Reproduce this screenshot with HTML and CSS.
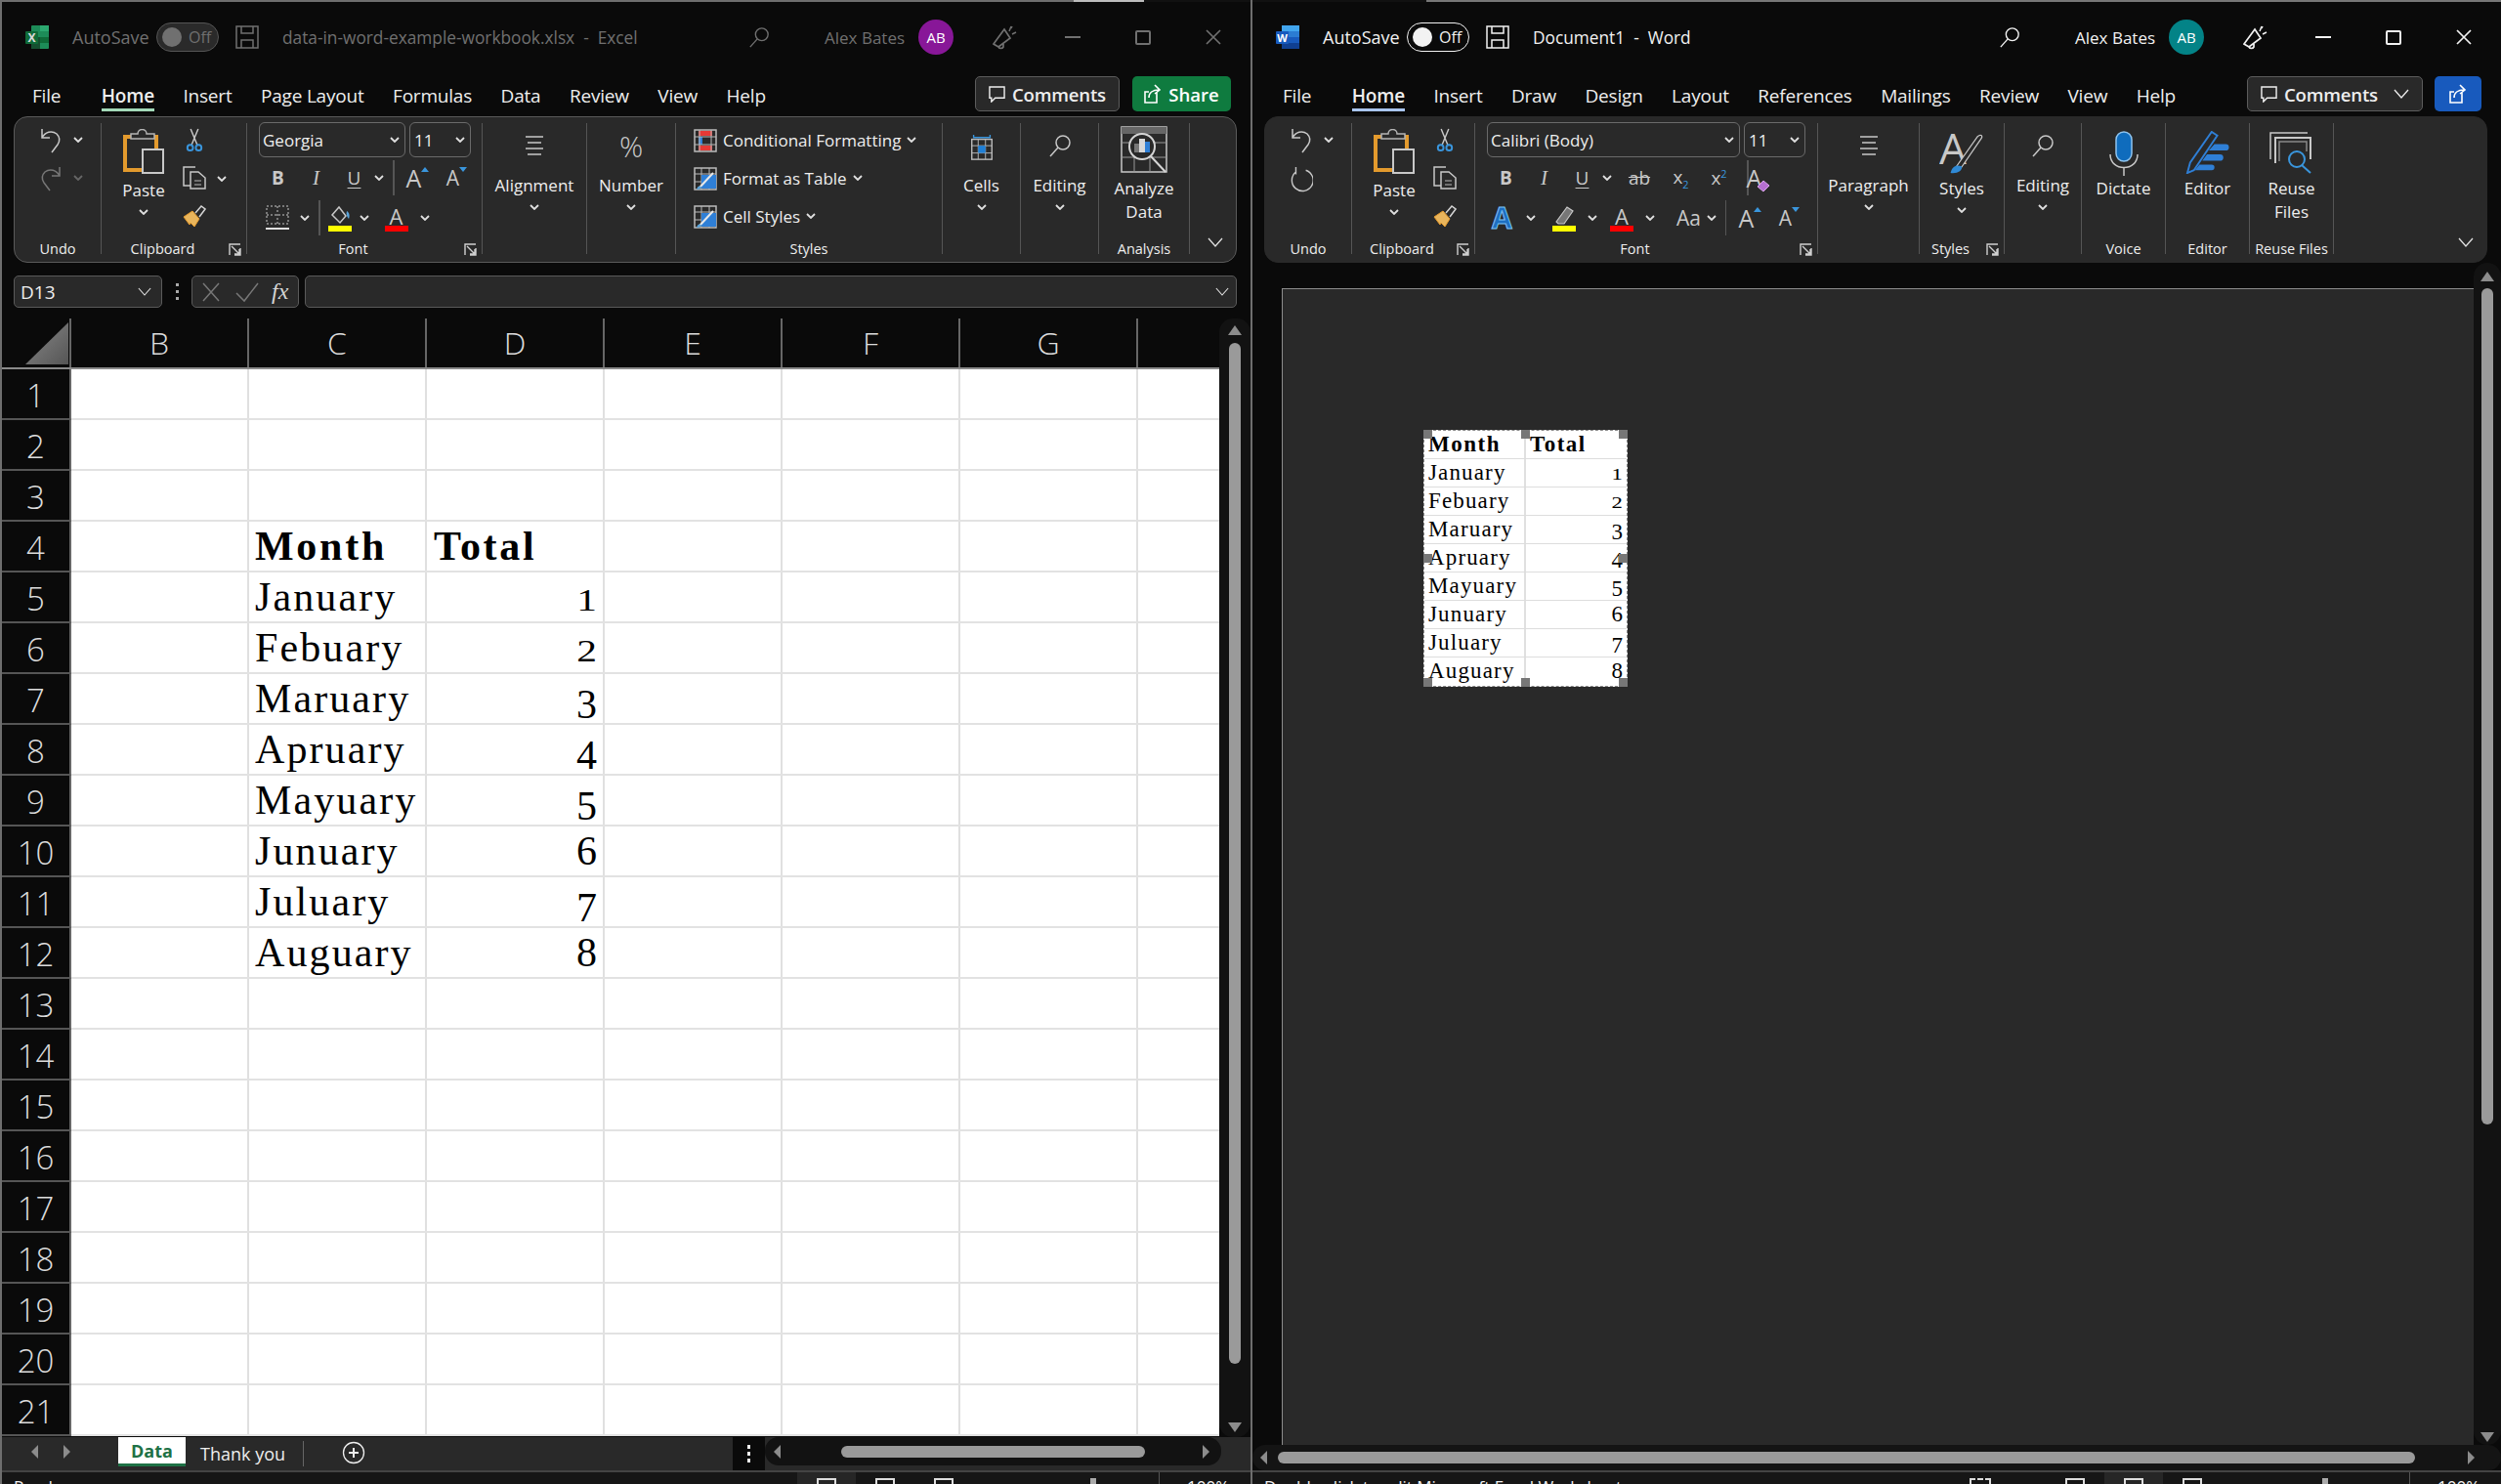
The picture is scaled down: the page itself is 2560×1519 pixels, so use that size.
FILE: index.html
```html
<!DOCTYPE html>
<html lang="en">
<head>
    <meta charset="UTF-8">
    <title>Excel and Word side by side</title>
    <link rel="stylesheet" href="styles.css">
</head>
<body>
<svg class="defs" width="0" height="0">
    <symbol id="save" viewBox="0 0 24 24"><path d="M1 1h22v22H1zM6 1v7h12V1M6 23v-8h12v8" fill="none" stroke="currentColor" stroke-width="1.5"/></symbol>
    <symbol id="search" viewBox="0 0 24 24"><circle cx="15" cy="9" r="7" fill="none" stroke="currentColor" stroke-width="1.5"/><path d="M10 14L2 23" stroke="currentColor" stroke-width="1.5"/></symbol>
    <symbol id="feedback" viewBox="0 0 25 26"><path d="M1 20L12 5l6 9-12 9zM6 23c1 2 4 2 5 0v-3" fill="none" stroke="currentColor" stroke-width="1.7"/><path d="M17 7l2-5M20 10l4-2M19 4l1-2" stroke="currentColor" stroke-width="1.5"/></symbol>
    <symbol id="chev" viewBox="0 0 10 6"><path d="M1 1l4 4 4-4" fill="none" stroke="currentColor" stroke-width="1.8"/></symbol>
    <symbol id="chev-thin" viewBox="0 0 16 10"><path d="M1 1l7 8 7-8" fill="none" stroke="currentColor" stroke-width="1.3"/></symbol>
    <symbol id="bubble" viewBox="0 0 18 18"><path d="M1 1h16v12H7l-4 4v-4H1z" fill="none" stroke="currentColor" stroke-width="1.5"/></symbol>
    <symbol id="share" viewBox="0 0 18 20"><path d="M13 9v10H1V8h4M5 14c0-5 4-8 10-8M11 1l5 5-5 4" fill="none" stroke="currentColor" stroke-width="1.6"/></symbol>
    <symbol id="undo" viewBox="0 0 24 26"><path d="M3 1v9h8M3 10C6 4 13 2 18 6c4 4 3 8 1 11l-6 8" fill="none" stroke="currentColor" stroke-width="1.5"/></symbol>
    <symbol id="redo" viewBox="0 0 24 26"><path d="M21 1v9h-8M21 10C18 4 11 2 6 6c-4 4-3 8-1 11l6 8" fill="none" stroke="currentColor" stroke-width="1.5"/></symbol>
    <symbol id="repeat" viewBox="0 0 26 28"><path d="M7 1v8M18 4.5a11.8 11.8 0 1 1-11 2" fill="none" stroke="currentColor" stroke-width="1.5"/></symbol>
    <symbol id="paste" viewBox="0 0 42 46"><path d="M9 8H2v34h18M30 8h4v12" fill="none" stroke="#e39a2d" stroke-width="4"/><path d="M8 10V5h7a4 4 0 0 1 9 0h8v5z" fill="#292929" stroke="#b5b5b5" stroke-width="1.5"/><rect x="20" y="21" width="21" height="24" fill="#292929" stroke="#c8c8c8" stroke-width="2"/></symbol>
    <symbol id="cut" viewBox="0 0 18 26"><path d="M5 1l7 17M13 1L6 18" stroke="#c8c8c8" stroke-width="1.5"/><circle cx="4.5" cy="21" r="3" fill="none" stroke="#3a96dd" stroke-width="2"/><circle cx="13.5" cy="21" r="3" fill="none" stroke="#3a96dd" stroke-width="2"/></symbol>
    <symbol id="copy" viewBox="0 0 24 24"><path d="M13 1H1v19h7" fill="none" stroke="#c8c8c8" stroke-width="1.5"/><path d="M8 6h8l7 6v11H8z" fill="#292929" stroke="#c8c8c8" stroke-width="1.5"/><path d="M12 15h7M12 19h7" stroke="#888" stroke-width="1.5"/></symbol>
    <symbol id="brush" viewBox="0 0 24 24"><path d="M1 13l9-6 7 8-5 8-4-4-1 2z" fill="#e9b55c" stroke="#e39a2d"/><path d="M13 9l6-7 4 3-6 8" fill="#292929" stroke="#d5d5d5" stroke-width="1.5"/></symbol>
    <symbol id="launcher" viewBox="0 0 13 13"><path d="M1 12V1h11M12 5v7H6M3 3l8 8M11 6v5H6" fill="none" stroke="#d0d0d0" stroke-width="1.4"/></symbol>
    <symbol id="align" viewBox="0 0 24 24"><path d="M3 3h18M5 9h14M3 15h18M5 21h14" stroke="currentColor" stroke-width="1.5"/></symbol>
    <symbol id="borders" viewBox="0 0 24 26"><path d="M1 1h22v18H1zM12 1v18M1 10h22" fill="none" stroke="#c8c8c8" stroke-dasharray="2 2"/><path d="M0 24h24" stroke="#e0e0e0" stroke-width="2"/></symbol>
    <symbol id="fill" viewBox="0 0 24 28"><path d="M4 11l7-8 7 9-6 7z" fill="none" stroke="#c8c8c8" stroke-width="1.5"/><path d="M19 7c3 2 3 5 2 8-2-2-3-5-2-8z" fill="#5aa5dc"/><rect y="22" width="24" height="6" fill="#ff0"/></symbol>
    <symbol id="marker" viewBox="0 0 24 28"><path d="M4 18L15 3l6 4-9 13H6z" fill="#777" stroke="#c8c8c8" stroke-width="1.2"/><rect y="22" width="24" height="6" fill="#ff0"/></symbol>
    <symbol id="cf" viewBox="0 0 24 24"><rect x="1" y="1" width="22" height="22" fill="none" stroke="#bbb" stroke-width="1.5"/><rect x="5" y="2" width="14" height="5" fill="#e53935"/><rect x="5" y="17" width="14" height="5" fill="#e53935"/><rect x="5" y="8" width="4" height="8" fill="#2f7fd6"/><path d="M1 8h22M1 16h22M6 1v22M18 1v22" stroke="#bbb"/></symbol>
    <symbol id="fat" viewBox="0 0 24 24"><rect x="1" y="1" width="22" height="22" fill="none" stroke="#bbb" stroke-width="1.5"/><path d="M1 7h22M1 15h22M8 1v22M16 1v22" stroke="#bbb"/><rect x="8" y="8" width="15" height="14" fill="#2f7fd6"/><path d="M6 21L20 6" stroke="#e8e8e8" stroke-width="2"/><path d="M3 23c1-4 3-4 5-3 0 2-2 3-5 3z" fill="#5aa5dc"/></symbol>
    <symbol id="cells" viewBox="0 0 24 30"><path d="M3 1v3h18V1" fill="none" stroke="#3a96dd" stroke-width="1.5"/><rect x="1" y="6" width="22" height="22" fill="none" stroke="#bbb" stroke-width="1.5"/><path d="M1 13h22M1 21h22M8 6v22M16 6v22" stroke="#bbb"/><rect x="8" y="13" width="8" height="8" fill="#1f7fd6"/></symbol>
    <symbol id="analyze" viewBox="0 0 48 48"><rect x="1" y="1" width="46" height="46" fill="none" stroke="#c8c8c8" stroke-width="1.5"/><rect x="1" y="1" width="46" height="7" fill="#666"/><path d="M1 32h46M1 17h46M14 32v16M30 32v16" stroke="#999"/><circle cx="22" cy="21" r="13" fill="#292929" stroke="#d5d5d5" stroke-width="2"/><rect x="14" y="18" width="5" height="9" fill="#777"/><rect x="19" y="13" width="6" height="14" fill="#d8d8d8"/><rect x="25" y="16" width="5" height="11" fill="#2f7fd6"/><path d="M31 31l15 16" stroke="#d5d5d5" stroke-width="2"/></symbol>
    <symbol id="mic" viewBox="0 0 30 46"><rect x="7" y="1" width="16" height="30" rx="8" fill="#0f6cbd" stroke="#8fc4ef" stroke-width="1.5"/><path d="M1 24c0 18 28 18 28 0M15 37v9" fill="none" stroke="#c8c8c8" stroke-width="1.5"/></symbol>
    <symbol id="editor" viewBox="0 0 46 46"><path d="M1 45l3-11L27 1l6 4L8 42z" fill="#292929" stroke="#2f7fd6" stroke-width="2"/><path d="M30 14h12a3 3 0 0 1 0 7H24zM22 25h14a3 3 0 0 1 0 7H17zM14 36h13a3 3 0 0 1 0 6H9z" fill="#2f7fd6"/></symbol>
    <symbol id="reuse" viewBox="0 0 46 42"><path d="M1 28V1h38" fill="none" stroke="#c8c8c8" stroke-width="1.5"/><path d="M6 32V6h36v22" fill="none" stroke="#c8c8c8" stroke-width="2"/><path d="M10 30V10h28v10" fill="none" stroke="#888" stroke-width="1.5"/><circle cx="28" cy="28" r="8" fill="#292929" stroke="#3a96dd" stroke-width="2"/><path d="M33 34l9 8" stroke="#3a96dd" stroke-width="2"/></symbol>
    <symbol id="eraser" viewBox="0 0 14 14"><path d="M1 8l6-6 6 5-6 6z" fill="#b56fd0" stroke="#d9a5ea"/></symbol>
    <symbol id="x-mark" viewBox="0 0 18 22"><path d="M1 2l16 18M17 2L1 20" stroke="currentColor" stroke-width="1.5"/></symbol>
    <symbol id="close" viewBox="0 0 16 16"><path d="M1 1l14 14M15 1L1 15" stroke="currentColor" stroke-width="1.7"/></symbol>
    <symbol id="check" viewBox="0 0 24 22"><path d="M1 12l8 8L23 2" fill="none" stroke="currentColor" stroke-width="1.5"/></symbol>
    <symbol id="plus-c" viewBox="0 0 24 24"><circle cx="12" cy="12" r="10.5" fill="none" stroke="currentColor" stroke-width="1.3"/><path d="M12 7v10M7 12h10" stroke="currentColor" stroke-width="2"/></symbol>
</svg>

<div class="desktop">
    <!-- Excel, inactive window -->
    <section class="window excel">
        <div class="edge"><span class="edge-a"></span><span class="edge-b"></span></div>
        <header class="titlebar">
            <svg class="logo" viewBox="0 0 24 24"><rect x="6" y="0" width="18" height="24" rx="1" fill="#21a366"/><rect x="15" y="0" width="9" height="6" fill="#33c481"/><rect x="6" y="12" width="9" height="12" fill="#185c37"/><rect x="15" y="12" width="9" height="6" fill="#107c41"/><rect x="0" y="6" width="13" height="13" rx="1" fill="#107c41"/><text x="6.5" y="16.5" font-size="12" font-weight="700" text-anchor="middle" fill="#fff" font-family="Open Sans">X</text></svg>
            <span class="autosave">AutoSave</span>
            <span class="toggle"><i></i>Off</span>
            <svg class="save"><use href="#save"/></svg>
            <span class="doc-title">data-in-word-example-workbook.xlsx &nbsp;-&nbsp; Excel</span>
            <svg class="tsearch"><use href="#search"/></svg>
            <span class="user">Alex Bates</span>
            <span class="avatar">AB</span>
            <svg class="feedback"><use href="#feedback"/></svg>
            <span class="win-min"></span>
            <span class="win-max"></span>
            <svg class="win-close"><use href="#close"/></svg>
        </header>
        <nav class="tabs">
            <span class="tab tab-file">File</span>
            <span class="tab tab-active">Home</span>
            <span class="tab">Insert</span>
            <span class="tab">Page Layout</span>
            <span class="tab">Formulas</span>
            <span class="tab">Data</span>
            <span class="tab">Review</span>
            <span class="tab">View</span>
            <span class="tab">Help</span>
            <span class="btn-comments"><svg class="ic-bubble"><use href="#bubble"/></svg>Comments</span>
            <span class="btn-share"><svg class="ic-share"><use href="#share"/></svg>Share</span>
        </nav>
        <div class="ribbon">
            <div class="group g-undo">
                <div class="group-body">
                    <div class="undo-row"><svg class="ic-undo"><use href="#undo"/></svg><svg class="chev"><use href="#chev"/></svg></div>
                    <div class="undo-row dim"><svg class="ic-undo"><use href="#redo"/></svg><svg class="chev"><use href="#chev"/></svg></div>
                </div>
                <div class="group-label">Undo</div>
            </div>
            <div class="group g-clip">
                <div class="group-body clip-body">
                    <div class="paste">
                        <svg class="ic-paste"><use href="#paste"/></svg>
                        <span class="big-text">Paste</span>
                        <svg class="chev big-chev"><use href="#chev"/></svg>
                    </div>
                    <div class="clip-tools">
                        <div class="clip-row"><svg class="ic-cut"><use href="#cut"/></svg></div>
                        <div class="clip-row"><svg class="ic-24"><use href="#copy"/></svg><svg class="chev clip-chev"><use href="#chev"/></svg></div>
                        <div class="clip-row"><svg class="ic-24"><use href="#brush"/></svg></div>
                    </div>
                </div>
                <div class="group-label with-launcher"><span>Clipboard</span><svg class="launcher"><use href="#launcher"/></svg></div>
            </div>
            <div class="group g-font">
                <div class="group-body">
                    <div class="combos">
                        <div class="combo combo-name">Georgia<svg class="chev"><use href="#chev"/></svg></div>
                        <div class="combo combo-size">11<svg class="chev"><use href="#chev"/></svg></div>
                    </div>
                    <div class="font-row">
                        <span class="fb fb-b">B</span><span class="fb fb-i">I</span><span class="fb fb-u">U</span><svg class="chev fb-chev"><use href="#chev"/></svg>
                        <span class="vsep"></span>
                        <span class="grow">A<i class="caret up"></i></span><span class="grow grow-sm">A<i class="caret down"></i></span>
                    </div>
                    <div class="font-row row-low">
                        <svg class="ic-24 ic-borders"><use href="#borders"/></svg><svg class="chev fb-chev"><use href="#chev"/></svg>
                        <span class="vsep"></span>
                        <svg class="ic-24 ic-fill"><use href="#fill"/></svg><svg class="chev fb-chev"><use href="#chev"/></svg>
                        <span class="color-a">A</span><svg class="chev fb-chev"><use href="#chev"/></svg>
                    </div>
                </div>
                <div class="group-label with-launcher"><span>Font</span><svg class="launcher"><use href="#launcher"/></svg></div>
            </div>
            <div class="group g-align">
                <div class="group-body big">
                    <div class="big-icon"><svg class="ic-24"><use href="#align"/></svg></div>
                    <span class="big-text">Alignment</span>
                    <svg class="chev big-chev"><use href="#chev"/></svg>
                </div>
            </div>
            <div class="group g-number">
                <div class="group-body big">
                    <div class="big-icon icon-pct">%</div>
                    <span class="big-text">Number</span>
                    <svg class="chev big-chev"><use href="#chev"/></svg>
                </div>
            </div>
            <div class="group g-styles">
                <div class="group-body style-list">
                    <div class="style-row"><svg class="ic-24"><use href="#cf"/></svg>Conditional Formatting<svg class="chev"><use href="#chev"/></svg></div>
                    <div class="style-row"><svg class="ic-24"><use href="#fat"/></svg>Format as Table<svg class="chev"><use href="#chev"/></svg></div>
                    <div class="style-row"><svg class="ic-24"><use href="#fat"/></svg>Cell Styles<svg class="chev"><use href="#chev"/></svg></div>
                </div>
                <div class="group-label">Styles</div>
            </div>
            <div class="group g-cells">
                <div class="group-body big">
                    <div class="big-icon"><svg class="ic-cells"><use href="#cells"/></svg></div>
                    <span class="big-text">Cells</span>
                    <svg class="chev big-chev"><use href="#chev"/></svg>
                </div>
            </div>
            <div class="group g-editing">
                <div class="group-body big">
                    <div class="big-icon"><svg class="ic-24"><use href="#search"/></svg></div>
                    <span class="big-text">Editing</span>
                    <svg class="chev big-chev"><use href="#chev"/></svg>
                </div>
            </div>
            <div class="group g-analysis">
                <div class="group-body big">
                    <div class="big-icon icon-tall"><svg class="ic-analyze"><use href="#analyze"/></svg></div>
                    <span class="big-text two-line">Analyze<br>Data</span>
                </div>
                <div class="group-label">Analysis</div>
            </div>
            <svg class="collapse"><use href="#chev-thin"/></svg>
        </div>

        <div class="formula-bar">
            <div class="name-box">D13<svg class="chev"><use href="#chev-thin"/></svg></div>
            <div class="fdots"><i></i><i></i><i></i></div>
            <div class="fx-box"><svg class="ic-x"><use href="#x-mark"/></svg><svg class="ic-check"><use href="#check"/></svg><span class="fx">fx</span></div>
            <div class="formula"><svg class="chev"><use href="#chev-thin"/></svg></div>
        </div>

        <div class="sheet-wrap">
            <div class="sheet">
                <div class="colhead">
                    <div class="corner"><i></i></div>
                    <div class="col">B</div><div class="col">C</div><div class="col">D</div><div class="col">E</div><div class="col">F</div><div class="col">G</div>
                </div>
                <div class="row"><div class="rh">1</div><div class="cells"></div></div>
                <div class="row"><div class="rh">2</div><div class="cells"></div></div>
                <div class="row"><div class="rh">3</div><div class="cells"></div></div>
                <div class="row"><div class="rh">4</div><div class="cells"><div class="cell-c serif strong">Month</div><div class="cell-d serif strong">Total</div></div></div>
                <div class="row"><div class="rh">5</div><div class="cells"><div class="cell-c serif">January</div><div class="cell-d serif num"><i class="d-x">1</i></div></div></div>
                <div class="row"><div class="rh">6</div><div class="cells"><div class="cell-c serif">Febuary</div><div class="cell-d serif num"><i class="d-x">2</i></div></div></div>
                <div class="row"><div class="rh">7</div><div class="cells"><div class="cell-c serif">Maruary</div><div class="cell-d serif num"><i class="d-low">3</i></div></div></div>
                <div class="row"><div class="rh">8</div><div class="cells"><div class="cell-c serif">Apruary</div><div class="cell-d serif num"><i class="d-low">4</i></div></div></div>
                <div class="row"><div class="rh">9</div><div class="cells"><div class="cell-c serif">Mayuary</div><div class="cell-d serif num"><i class="d-low">5</i></div></div></div>
                <div class="row"><div class="rh">10</div><div class="cells"><div class="cell-c serif">Junuary</div><div class="cell-d serif num"><i>6</i></div></div></div>
                <div class="row"><div class="rh">11</div><div class="cells"><div class="cell-c serif">Juluary</div><div class="cell-d serif num"><i class="d-low">7</i></div></div></div>
                <div class="row"><div class="rh">12</div><div class="cells"><div class="cell-c serif">Auguary</div><div class="cell-d serif num"><i>8</i></div></div></div>
                <div class="row"><div class="rh">13</div><div class="cells"></div></div>
                <div class="row"><div class="rh">14</div><div class="cells"></div></div>
                <div class="row"><div class="rh">15</div><div class="cells"></div></div>
                <div class="row"><div class="rh">16</div><div class="cells"></div></div>
                <div class="row"><div class="rh">17</div><div class="cells"></div></div>
                <div class="row"><div class="rh">18</div><div class="cells"></div></div>
                <div class="row"><div class="rh">19</div><div class="cells"></div></div>
                <div class="row"><div class="rh">20</div><div class="cells"></div></div>
                <div class="row"><div class="rh">21</div><div class="cells"></div></div>
            </div>
            <div class="vscroll vscroll-xl">
                <i class="tri tri-up"></i>
                <div class="vthumb"></div>
                <i class="tri tri-down"></i>
            </div>
        </div>

        <div class="tabbar">
            <div class="sheet-nav"><i class="tri tri-left"></i><i class="tri tri-right"></i></div>
            <span class="sheet-tab sheet-active">Data</span>
            <span class="sheet-tab">Thank you</span>
            <svg class="ic-plus"><use href="#plus-c"/></svg>
            <div class="tab-dots"><i></i><i></i><i></i></div>
            <div class="hscroll hscroll-xl">
                <i class="tri tri-left"></i>
                <div class="hthumb"></div>
                <i class="tri tri-right"></i>
            </div>
        </div>
        <footer class="status">
            <span class="status-text">Ready</span>
            <span class="view view-on"><b></b></span><span class="view"><b></b></span><span class="view"><b></b></span>
            <span class="zoom-tick"></span>
            <span class="zoom-pct">100%</span>
        </footer>
    </section>

    <!-- Word, active window -->
    <section class="window word">
        <div class="edge"><span class="edge-a"></span><span class="edge-b"></span></div>
        <header class="titlebar">
            <svg class="logo" viewBox="0 0 24 24"><rect x="6" y="0" width="18" height="24" rx="1" fill="#2b7cd3"/><rect x="6" y="0" width="18" height="6" fill="#41a5ee"/><rect x="6" y="12" width="18" height="6" fill="#185abd"/><rect x="6" y="18" width="18" height="6" fill="#103f91"/><rect x="0" y="6" width="13" height="13" rx="1" fill="#185abd"/><text x="6.5" y="16.5" font-size="11" font-weight="700" text-anchor="middle" fill="#fff" font-family="Open Sans">W</text></svg>
            <span class="autosave">AutoSave</span>
            <span class="toggle"><i></i>Off</span>
            <svg class="save"><use href="#save"/></svg>
            <span class="doc-title">Document1 &nbsp;-&nbsp; Word</span>
            <svg class="tsearch"><use href="#search"/></svg>
            <span class="user">Alex Bates</span>
            <span class="avatar">AB</span>
            <svg class="feedback"><use href="#feedback"/></svg>
            <span class="win-min"></span>
            <span class="win-max"></span>
            <svg class="win-close"><use href="#close"/></svg>
        </header>
        <nav class="tabs">
            <span class="tab tab-file">File</span>
            <span class="tab tab-active">Home</span>
            <span class="tab">Insert</span>
            <span class="tab">Draw</span>
            <span class="tab">Design</span>
            <span class="tab">Layout</span>
            <span class="tab">References</span>
            <span class="tab">Mailings</span>
            <span class="tab">Review</span>
            <span class="tab">View</span>
            <span class="tab">Help</span>
            <span class="btn-comments"><svg class="ic-bubble"><use href="#bubble"/></svg>Comments<svg class="comments-chev"><use href="#chev-thin"/></svg></span>
            <span class="btn-share"><svg class="ic-share"><use href="#share"/></svg></span>
        </nav>
        <div class="ribbon">
            <div class="group g-undo">
                <div class="group-body">
                    <div class="undo-row"><svg class="ic-undo"><use href="#undo"/></svg><svg class="chev"><use href="#chev"/></svg></div>
                    <div class="undo-row"><svg class="ic-undo"><use href="#repeat"/></svg></div>
                </div>
                <div class="group-label">Undo</div>
            </div>
            <div class="group g-clip">
                <div class="group-body clip-body">
                    <div class="paste">
                        <svg class="ic-paste"><use href="#paste"/></svg>
                        <span class="big-text">Paste</span>
                        <svg class="chev big-chev"><use href="#chev"/></svg>
                    </div>
                    <div class="clip-tools">
                        <div class="clip-row"><svg class="ic-cut"><use href="#cut"/></svg></div>
                        <div class="clip-row"><svg class="ic-24"><use href="#copy"/></svg></div>
                        <div class="clip-row"><svg class="ic-24"><use href="#brush"/></svg></div>
                    </div>
                </div>
                <div class="group-label with-launcher"><span>Clipboard</span><svg class="launcher"><use href="#launcher"/></svg></div>
            </div>
            <div class="group g-font">
                <div class="group-body">
                    <div class="combos">
                        <div class="combo combo-name">Calibri (Body)<svg class="chev"><use href="#chev"/></svg></div>
                        <div class="combo combo-size">11<svg class="chev"><use href="#chev"/></svg></div>
                    </div>
                    <div class="font-row">
                        <span class="fb fb-b">B</span><span class="fb fb-i">I</span><span class="fb fb-u">U</span><svg class="chev fb-chev"><use href="#chev"/></svg>
                        <span class="fb fb-strike">ab</span>
                        <span class="fb fb-script">x<sub>2</sub></span>
                        <span class="fb fb-script">x<sup>2</sup></span>
                        <span class="vsep"></span>
                        <span class="clear-fmt">A<svg class="ic-eraser"><use href="#eraser"/></svg></span>
                    </div>
                    <div class="font-row row-low">
                        <span class="text-fx">A</span><svg class="chev fb-chev"><use href="#chev"/></svg>
                        <svg class="ic-24 ic-fill"><use href="#marker"/></svg><svg class="chev fb-chev"><use href="#chev"/></svg>
                        <span class="color-a">A</span><svg class="chev fb-chev"><use href="#chev"/></svg>
                        <span class="case">Aa</span><svg class="chev fb-chev"><use href="#chev"/></svg>
                        <span class="vsep"></span>
                        <span class="grow">A<i class="caret up"></i></span><span class="grow grow-sm">A<i class="caret down"></i></span>
                    </div>
                </div>
                <div class="group-label with-launcher"><span>Font</span><svg class="launcher"><use href="#launcher"/></svg></div>
            </div>
            <div class="group g-para">
                <div class="group-body big">
                    <div class="big-icon"><svg class="ic-24"><use href="#align"/></svg></div>
                    <span class="big-text">Paragraph</span>
                    <svg class="chev big-chev"><use href="#chev"/></svg>
                </div>
            </div>
            <div class="group g-wstyles">
                <div class="group-body big">
                    <div class="big-icon icon-lg">
                        <svg class="ic-46" viewBox="0 0 46 46"><text x="-1" y="36" font-size="46" font-family="Open Sans" fill="#c8c8c8">A</text><path d="M16 40L40 6c3-3 6-1 4 2L22 40" fill="#292929" stroke="#c8c8c8" stroke-width="1.3"/><path d="M11 45c2-8 7-9 12-7 1 5-5 8-12 7z" fill="#2f8ad6"/></svg>
                    </div>
                    <span class="big-text">Styles</span>
                    <svg class="chev big-chev"><use href="#chev"/></svg>
                </div>
                <div class="group-label with-launcher"><span>Styles</span><svg class="launcher"><use href="#launcher"/></svg></div>
            </div>
            <div class="group g-wediting">
                <div class="group-body big">
                    <div class="big-icon"><svg class="ic-24"><use href="#search"/></svg></div>
                    <span class="big-text">Editing</span>
                    <svg class="chev big-chev"><use href="#chev"/></svg>
                </div>
            </div>
            <div class="group g-voice">
                <div class="group-body big">
                    <div class="big-icon icon-lg"><svg class="ic-mic"><use href="#mic"/></svg></div>
                    <span class="big-text">Dictate</span>
                </div>
                <div class="group-label">Voice</div>
            </div>
            <div class="group g-voice">
                <div class="group-body big">
                    <div class="big-icon icon-lg"><svg class="ic-46"><use href="#editor"/></svg></div>
                    <span class="big-text">Editor</span>
                </div>
                <div class="group-label">Editor</div>
            </div>
            <div class="group g-voice">
                <div class="group-body big">
                    <div class="big-icon icon-lg"><svg class="ic-46"><use href="#reuse"/></svg></div>
                    <span class="big-text two-line">Reuse<br>Files</span>
                </div>
                <div class="group-label">Reuse Files</div>
            </div>
            <svg class="collapse"><use href="#chev-thin"/></svg>
        </div>

        <div class="doc-area">
            <div class="page">
                <div class="embed">
                    <div class="embed-row"><div class="ecol serif strong">Month</div><div class="ecol serif strong">Total</div></div>
                    <div class="embed-row"><div class="ecol serif">January</div><div class="ecol serif num"><i class="d-x">1</i></div></div>
                    <div class="embed-row"><div class="ecol serif">Febuary</div><div class="ecol serif num"><i class="d-x">2</i></div></div>
                    <div class="embed-row"><div class="ecol serif">Maruary</div><div class="ecol serif num"><i class="d-low">3</i></div></div>
                    <div class="embed-row"><div class="ecol serif">Apruary</div><div class="ecol serif num"><i class="d-low">4</i></div></div>
                    <div class="embed-row"><div class="ecol serif">Mayuary</div><div class="ecol serif num"><i class="d-low">5</i></div></div>
                    <div class="embed-row"><div class="ecol serif">Junuary</div><div class="ecol serif num"><i>6</i></div></div>
                    <div class="embed-row"><div class="ecol serif">Juluary</div><div class="ecol serif num"><i class="d-low">7</i></div></div>
                    <div class="embed-row"><div class="ecol serif">Auguary</div><div class="ecol serif num"><i>8</i></div></div>
                    <!-- resize handles sit over the table -->
                    <i class="handle h-tl"></i><i class="handle h-tc"></i><i class="handle h-tr"></i>
                    <i class="handle h-ml"></i><i class="handle h-mr"></i>
                    <i class="handle h-bl"></i><i class="handle h-bc"></i><i class="handle h-br"></i>
                </div>
            </div>
            <div class="vscroll vscroll-wd">
                <i class="tri tri-up"></i>
                <div class="vthumb"></div>
                <i class="tri tri-down"></i>
            </div>
        </div>
        <div class="hscroll hscroll-wd">
            <i class="tri tri-left"></i>
            <div class="hthumb"></div>
            <i class="tri tri-right"></i>
        </div>
        <footer class="status">
            <span class="status-text">Double-click to edit Microsoft Excel Worksheet</span>
            <span class="focus-ic"></span>
            <span class="view"><b></b></span><span class="view view-on"><b></b></span><span class="view"><b></b></span>
            <span class="zoom-tick"></span>
            <span class="zoom-pct">100%</span>
        </footer>
    </section>
</div>
</body>
</html>
```

FILE: styles.css
```css
* {
    box-sizing: border-box;
}
body {
    margin: 0;
    background-color: #0a0a0a;
    font-family: "Open Sans", "Noto Sans", sans-serif;
    color: #eee;
    overflow: hidden;
}
i {
    font-style: normal;
}
svg {
    display: block;
    flex: none;
}
.defs {
    position: absolute;
}
.desktop {
    display: flex;
    width: 2560px;
    height: 1519px;
    overflow: hidden;
}

/* windows */
.window {
    width: 1280px;
    height: 1519px;
    display: flex;
    flex-direction: column;
    border-left: 2px solid #6e6e6e;
    background-color: #0a0a0a;
    overflow: hidden;
}
.excel {
    --title: #707070;
    --accent: #a3d9b8;
}
.word {
    --title: #f2f2f2;
    --accent: #a9c5ee;
}
.edge {
    height: 2px;
    flex: none;
    display: flex;
    background-color: #6e6e6e;
}
.excel .edge-a {
    width: 1097px;
}
.excel .edge-b {
    width: 72px;
    background-color: #bdbdbd;
}
.excel .edge {
    background: linear-gradient(90deg, #6e6e6e 0 1169px, #111 1169px);
}
.word .edge-a {
    width: 178px;
    background-color: #111;
}
.word .edge {
    background-color: #777;
}

/* title bar */
.titlebar {
    height: 76px;
    flex: none;
    display: flex;
    align-items: center;
    padding: 0 30px 4px 24px;
    color: var(--title);
    font-size: 18px;
}
.logo {
    width: 24px;
    height: 24px;
}
.excel .logo {
    opacity: .85;
}
.autosave {
    width: 76px;
    margin-left: 24px;
    white-space: nowrap;
}
.toggle {
    width: 64px;
    height: 30px;
    margin-left: 10px;
    border: 1.5px solid var(--title);
    border-radius: 15px;
    display: flex;
    align-items: center;
    padding-left: 5px;
    gap: 7px;
    font-size: 16px;
}
.excel .toggle {
    border-color: #555;
    background-color: #2a2a2a;
}
.toggle i {
    width: 20px;
    height: 20px;
    border-radius: 50%;
    background-color: var(--title);
}
.save {
    width: 24px;
    height: 24px;
    margin-left: 17px;
}
.doc-title {
    margin-left: 24px;
    font-size: 17.3px;
    white-space: nowrap;
}
.tsearch {
    width: 22px;
    height: 22px;
    margin-left: auto;
}
.user {
    width: 79px;
    margin-left: 56px;
    font-size: 17px;
    white-space: nowrap;
    text-align: right;
}
.avatar {
    width: 36px;
    height: 36px;
    margin-left: 17px;
    border-radius: 50%;
    text-align: center;
    line-height: 36px;
    font-size: 15px;
    color: #fff;
}
.excel .avatar {
    background-color: #881798;
}
.word .avatar {
    background-color: #038387;
}
.feedback {
    width: 25px;
    height: 26px;
    margin-left: 40px;
}
.win-min {
    width: 16px;
    height: 2px;
    margin-left: 49px;
    background-color: var(--title);
}
.win-max {
    width: 16px;
    height: 15px;
    margin-left: 56px;
    border: 2px solid var(--title);
    border-radius: 2px;
}
.win-close {
    width: 16px;
    height: 16px;
    margin-left: 56px;
}

/* tab row */
.tabs {
    height: 41px;
    flex: none;
    display: flex;
    padding: 0 20px 0 31px;
    gap: 29.5px;
    font-size: 19px;
}
.tab {
    height: 36px;
    line-height: 40px;
    white-space: nowrap;
    letter-spacing: -.2px;
}
.tab-file {
    margin-right: 12px;
}
.tab-active {
    font-weight: 600;
    border-bottom: 3px solid var(--accent);
}
.btn-comments {
    height: 36px;
    margin-left: auto;
    display: flex;
    align-items: center;
    gap: 7px;
    padding: 0 13px;
    border: 1px solid #5c5c5c;
    border-radius: 5px;
    background-color: #292929;
    font-size: 18.6px;
    font-weight: 600;
    letter-spacing: -.2px;
}
.excel .btn-comments {
    width: 148px;
}
.word .btn-comments {
    width: 180px;
}
.ic-bubble {
    width: 17px;
    height: 17px;
}
.comments-chev {
    width: 16px;
    height: 10px;
    margin-left: 9px;
}
.btn-share {
    height: 36px;
    display: flex;
    align-items: center;
    justify-content: center;
    gap: 7px;
    border-radius: 5px;
    color: #fff;
    font-size: 18.6px;
    font-weight: 600;
}
.excel .btn-share {
    width: 101px;
    margin-left: -16.5px;
    background-color: #0f7b3f;
}
.word .btn-share {
    width: 48px;
    margin-left: -17.5px;
    background-color: #185abd;
}
.ic-share {
    width: 18px;
    height: 20px;
}

/* ribbon */
.ribbon {
    height: 150px;
    flex: none;
    display: flex;
    margin: 0 14px 0 12px;
    padding-top: 6px;
    border: 1px solid #5a5a5a;
    border-radius: 14px;
    background-color: #292929;
    font-size: 17px;
}
.word .ribbon {
    border-color: #292929;
}
.group {
    height: 134px;
    flex: none;
    display: flex;
    flex-direction: column;
    border-right: 1.5px solid #555;
}
.group-body {
    height: 119px;
    flex: none;
}
.group-label {
    height: 20px;
    line-height: 20px;
    font-size: 14.5px;
    text-align: center;
    white-space: nowrap;
}
.with-launcher {
    display: grid;
    grid-template-columns: 1fr 13px;
    padding-right: 5px;
    gap: 5px;
}
.launcher {
    width: 13px;
    height: 13px;
    margin-top: 4px;
}
.chev {
    width: 10px;
    height: 6px;
    color: #e0e0e0;
}
.big-text {
    display: block;
    height: 20px;
    line-height: 20px;
    white-space: nowrap;
    text-align: center;
}
.big-chev {
    margin: 9px auto 0;
}
.big {
    display: flex;
    flex-direction: column;
    align-items: center;
}
.big-icon {
    height: 54px;
    padding-top: 11px;
    color: #c8c8c8;
}
.icon-pct {
    padding-top: 3px;
    font-size: 30px;
    font-weight: 300;
    line-height: 42px;
}
.icon-lg {
    height: 57px;
    padding-top: 8px;
}
.icon-tall {
    height: 57px;
    padding-top: 3px;
}
.ic-24 {
    width: 24px;
    height: 24px;
}
.ic-46 {
    width: 46px;
    height: 44px;
}
.ic-mic {
    width: 30px;
    height: 46px;
}
.ic-cells {
    width: 24px;
    height: 28px;
}
.ic-analyze {
    width: 48px;
    height: 48px;
}
.two-line {
    height: 48px;
    margin-top: -2px;
    line-height: 24px;
}
.collapse {
    width: 16px;
    height: 10px;
    margin-left: auto;
    margin-right: 13px;
    align-self: flex-end;
    margin-bottom: 15px;
    color: #e0e0e0;
}

/* undo group */
.g-undo {
    width: 89px;
}
.g-undo .group-body {
    padding: 4px 0 0 25px;
}
.undo-row {
    height: 39px;
    display: flex;
    align-items: flex-start;
    color: #c8c8c8;
}
.undo-row .chev {
    margin: 10px 0 0 11px;
}
.dim {
    color: #777;
}
.dim .chev {
    color: #666;
}
.ic-undo {
    width: 24px;
    height: 28px;
}

/* clipboard group */
.g-clip {
    width: 149px;
}
.word .g-clip {
    width: 126px;
}
.clip-body {
    display: flex;
}
.paste {
    width: 50px;
    margin-left: 18px;
    display: flex;
    flex-direction: column;
    align-items: center;
    flex: none;
}
.paste .big-text {
    margin-top: 7px;
}
.ic-paste {
    width: 42px;
    height: 46px;
    margin-top: 6px;
}
.clip-tools {
    margin: 5px 0 0 15px;
}
.clip-row {
    height: 39px;
    display: flex;
}
.ic-cut {
    width: 18px;
    height: 25px;
    margin-left: 3px;
}
.clip-chev {
    margin: 10px 0 0 11px;
}

/* font group */
.g-font {
    width: 241px;
}
.word .g-font {
    width: 351px;
}
.g-font .group-body {
    padding-left: 12px;
}
.combos {
    display: flex;
    gap: 4px;
    margin-top: -1px;
}
.combo {
    height: 36px;
    display: flex;
    align-items: center;
    justify-content: space-between;
    padding: 0 5px 0 3px;
    border: 1px solid #6a6a6a;
    border-radius: 6px;
    font-size: 17px;
    white-space: nowrap;
}
.combo-name {
    width: 150px;
}
.word .combo-name {
    width: 259px;
}
.combo-size {
    width: 63px;
    padding-left: 4px;
}
.font-row {
    height: 38px;
    margin-top: 2px;
    display: flex;
    align-items: center;
    color: #c8c8c8;
}
.row-low {
    margin-top: 3px;
}
.fb {
    width: 39px;
    text-align: center;
    font-size: 19px;
}
.fb-b {
    font-weight: 700;
}
.fb-i {
    font-style: italic;
    font-family: "Liberation Serif", serif;
    font-size: 21px;
}
.fb-u {
    text-decoration: underline;
    text-underline-offset: 3px;
}
.fb-chev {
    margin-left: 1px;
}
.fb-strike {
    width: 51px;
    padding-left: 5px;
    text-decoration: line-through;
}
.fb-script {
    width: 39px;
}
.fb-script sub,
.fb-script sup {
    font-size: 11px;
    color: #3a96dd;
}
.vsep {
    width: 1.5px;
    height: 36px;
    margin: 0 4px 0 9px;
    background-color: #555;
}
.grow {
    width: 40px;
    font-size: 25px;
    display: flex;
    align-items: flex-start;
    justify-content: center;
    line-height: 30px;
}
.grow-sm {
    font-size: 21px;
}
.caret {
    width: 8px;
    height: 5px;
    margin-top: 4px;
    border-left: 4px solid transparent;
    border-right: 4px solid transparent;
}
.caret.up {
    border-bottom: 5px solid #3a96dd;
}
.caret.down {
    border-top: 5px solid #3a96dd;
}
.ic-borders {
    margin-left: 7px;
    margin-right: 10px;
    height: 26px;
}
.ic-fill {
    height: 28px;
    margin-left: 4px;
    margin-right: 7px;
}
.word .ic-fill {
    margin-right: 11px;
    margin-left: 17px;
}
.color-a {
    width: 24px;
    height: 28px;
    margin-left: 16px;
    margin-right: 11px;
    font-size: 22px;
    line-height: 24px;
    text-align: center;
    border-bottom: 6px solid #f00;
}
.word .color-a {
    margin-left: 13px;
}
.text-fx {
    width: 30px;
    margin-left: 5px;
    margin-right: 4px;
    font-size: 30px;
    font-weight: 700;
    line-height: 32px;
    color: #1d6fc2;
    -webkit-text-stroke: 1px #7cc0f5;
}
.case {
    margin: 0 5px 0 22px;
    font-size: 21px;
}
.clear-fmt {
    width: 36px;
    margin-left: -6px;
    display: flex;
    align-items: flex-end;
    font-size: 25px;
    line-height: 30px;
}
.ic-eraser {
    width: 14px;
    height: 14px;
    margin-left: -5px;
}

/* big button groups */
.g-align {
    width: 107px;
}
.g-number {
    width: 91px;
}
.g-cells,
.g-editing {
    width: 80px;
}
.g-analysis {
    width: 93px;
}
.g-para {
    width: 104px;
}
.g-wstyles {
    width: 87px;
}
.g-wediting {
    width: 79px;
}
.g-voice {
    width: 86px;
}

/* styles list */
.g-styles {
    width: 273px;
}
.style-list {
    padding: 6px 0 0 18px;
}
.style-row {
    height: 39px;
    display: flex;
    align-items: flex-start;
    line-height: 24px;
    white-space: nowrap;
}
.style-row svg.ic-24 {
    margin-right: 6px;
}
.style-row .chev {
    margin: 8px 0 0 6px;
}

/* formula bar */
.formula-bar {
    height: 33px;
    flex: none;
    display: flex;
    margin: 13px 14px 11px 12px;
    font-size: 19px;
}
.name-box,
.fx-box,
.formula {
    display: flex;
    align-items: center;
    border: 1px solid #5a5a5a;
    border-radius: 5px;
    background-color: #292929;
}
.name-box {
    width: 152px;
    padding: 0 10px 0 6px;
    justify-content: space-between;
}
.name-box .chev,
.formula .chev {
    width: 14px;
    height: 9px;
}
.fdots {
    width: 30px;
    display: flex;
    flex-direction: column;
    align-items: center;
    justify-content: center;
    gap: 4px;
}
.fdots i {
    width: 3px;
    height: 3px;
    background-color: #aaa;
}
.fx-box {
    width: 110px;
    padding-left: 10px;
    color: #777;
}
.ic-x {
    width: 18px;
    height: 22px;
}
.ic-check {
    width: 24px;
    height: 22px;
    margin-left: 16px;
}
.fx {
    margin-left: 13px;
    font-family: "Liberation Serif", serif;
    font-style: italic;
    font-size: 24px;
    color: #d5d5d5;
}
.formula {
    flex: 1;
    margin-left: 6px;
    justify-content: flex-end;
    padding-right: 7px;
}

/* sheet */
.sheet-wrap {
    height: 1145px;
    flex: none;
    display: flex;
}
.sheet {
    width: 1246px;
    flex: none;
    overflow: hidden;
    color: #dcdcdc;
}
.colhead {
    height: 52px;
    display: flex;
    border-bottom: 2px solid #8a8a8a;
}
.corner {
    width: 71px;
    flex: none;
    border-right: 2px solid #666;
    padding: 4px 0 0 24px;
}
.corner i {
    display: block;
    width: 44px;
    height: 43px;
    background: linear-gradient(135deg, #8a8a8a, #555);
    clip-path: polygon(100% 0, 100% 100%, 0 100%);
}
.col {
    width: 182px;
    flex: none;
    border-right: 2px solid #666;
    text-align: center;
    font-size: 32px;
    font-weight: 300;
    line-height: 50px;
}
.row {
    height: 52px;
    display: flex;
}
.rh {
    width: 71px;
    flex: none;
    border-right: 2px solid #666;
    border-bottom: 2px solid #555;
    text-align: center;
    font-size: 33px;
    font-weight: 300;
    line-height: 53px;
}
.cells {
    flex: 1;
    display: flex;
    background-color: #fff;
    background-image: repeating-linear-gradient(90deg, #fff 0 180.5px, #e0e0e0 180.5px 182px);
    border-bottom: 2px solid #e2e2e2;
}
.serif {
    font-family: "Liberation Serif", "Times New Roman", serif;
    letter-spacing: .05em;
    color: #000;
    white-space: nowrap;
}
.strong {
    font-weight: 700;
    letter-spacing: .065em;
}
.cell-c,
.cell-d {
    width: 182px;
    font-size: 42px;
    line-height: 50px;
}
.cell-c {
    margin-left: 182px;
    padding-left: 6px;
}
.cell-d {
    padding-left: 7px;
}
.num {
    text-align: right;
    padding-right: 8px;
    letter-spacing: 0;
}
.num i {
    display: inline-block;
    transform-origin: right bottom;
}
/* no old-style figures in the serif we have, so shift them by hand */
.num .d-x {
    font-size: .76em;
    transform: scaleX(1.3);
}
.num .d-low {
    transform: translateY(.15em);
}

/* scrollbars */
.tri {
    display: block;
    width: 0;
    height: 0;
    flex: none;
}
.tri-up {
    border-left: 7px solid transparent;
    border-right: 7px solid transparent;
    border-bottom: 10px solid #8c8c8c;
}
.tri-down {
    border-left: 7px solid transparent;
    border-right: 7px solid transparent;
    border-top: 10px solid #8c8c8c;
}
.tri-left {
    border-top: 7px solid transparent;
    border-bottom: 7px solid transparent;
    border-right: 7px solid #8c8c8c;
}
.tri-right {
    border-top: 7px solid transparent;
    border-bottom: 7px solid transparent;
    border-left: 7px solid #8c8c8c;
}
.vscroll {
    flex: none;
    display: flex;
    flex-direction: column;
    align-items: center;
    background-color: #121212;
    border-radius: 14px;
}
.vscroll-xl {
    width: 32px;
    padding-top: 7px;
}
.vscroll-xl .vthumb {
    height: 1045px;
    margin-top: 8px;
}
.vscroll-xl .tri-down {
    margin-top: 60px;
}
.vthumb {
    width: 12px;
    border-radius: 6px;
    background-color: #9a9a9a;
}
.vscroll-wd {
    width: 28px;
    padding-top: 9px;
    margin-top: 0;
}
.vscroll-wd .vthumb {
    height: 856px;
    margin-top: 7px;
}
.vscroll-wd .tri-down {
    margin-top: 315px;
}
.hscroll {
    display: flex;
    align-items: center;
    background-color: #121212;
    border-radius: 14px;
}
.hthumb {
    height: 12px;
    border-radius: 6px;
    background-color: #9a9a9a;
}
.hscroll-xl {
    width: 467px;
    height: 29px;
    padding-left: 9px;
    margin-right: 30px;
}
.hscroll-xl .hthumb {
    width: 311px;
    margin: 0 59px 0 62px;
}
.hscroll-wd {
    height: 26px;
    flex: none;
    padding: 0 8px;
    background-color: #141414;
}
.hscroll-wd .hthumb {
    width: 1164px;
    margin: 0 54px 0 11px;
}

/* sheet tabs */
.tabbar {
    height: 34px;
    flex: none;
    display: flex;
    align-items: flex-start;
    background-color: #292929;
    font-size: 18px;
}
.sheet-nav {
    width: 119px;
    height: 30px;
    display: flex;
    align-items: center;
    gap: 26px;
    padding-left: 30px;
}
.sheet-tab {
    width: 121px;
    height: 26px;
    margin-top: 4px;
    line-height: 26px;
    padding-left: 15px;
    white-space: nowrap;
    border-right: 1px solid #666;
}
.sheet-active {
    width: 69px;
    height: 30px;
    margin-top: 0;
    padding: 0;
    border: 0;
    border-bottom: 3px solid #1e7145;
    background-color: #fff;
    color: #1e7145;
    font-weight: 700;
    text-align: center;
    line-height: 29px;
}
.ic-plus {
    width: 24px;
    height: 24px;
    margin: 4px 0 0 39px;
}
.tab-dots {
    width: 33px;
    height: 34px;
    margin-left: auto;
    display: flex;
    flex-direction: column;
    align-items: center;
    justify-content: center;
    gap: 3px;
    background-color: #0a0a0a;
}
.tab-dots i {
    width: 3px;
    height: 4px;
    background-color: #eee;
}

/* status bar, cut off by the bottom of the screen */
.status {
    height: 14px;
    flex: none;
    display: flex;
    align-items: flex-start;
    border-top: 2px solid #444;
    background-color: #161616;
    overflow: hidden;
    padding-left: 12px;
    font-size: 17px;
    line-height: 30px;
    color: #f0f0f0;
}
.status-text {
    flex: 1;
    white-space: nowrap;
}
.view {
    width: 60px;
    height: 12px;
    display: flex;
    justify-content: center;
    padding-top: 6px;
}
.view b {
    width: 20px;
    height: 12px;
    border: 2px solid #ddd;
    border-bottom: 0;
}
.view-on {
    background-color: #262626;
}
.focus-ic {
    width: 22px;
    height: 12px;
    margin: 6px 56px 0 0;
    border: 2px dashed #ddd;
    border-bottom: 0;
}
.zoom-tick {
    width: 6px;
    height: 12px;
    margin: 6px 0 0 120px;
    background-color: #aaa;
}
.word .zoom-tick {
    margin-left: 103px;
}
.zoom-pct {
    width: 94px;
    margin-left: 64px;
    padding-left: 28px;
    border-left: 1px solid #555;
}
.word .zoom-pct {
    margin-left: 83px;
}

/* word document */
.doc-area {
    height: 1210px;
    flex: none;
    display: flex;
}
.page {
    width: 1220px;
    margin: 26px 0 0 30px;
    padding: 144px 0 0 144px;
    flex: none;
    border-top: 1.5px solid #8c8c8c;
    border-left: 1.5px solid #8c8c8c;
    background-color: #292929;
}
.embed {
    position: relative;
    width: 209px;
    height: 263px;
    background-color: #fff;
    border: 1px dashed #888;
}
.embed-row {
    height: 29px;
    display: flex;
    border-bottom: 1px solid #ddd;
}
.embed-row:last-of-type {
    border-bottom: 0;
}
.ecol {
    width: 104px;
    padding: 0 0 0 4px;
    line-height: 27px;
    font-size: 23px;
    border-right: 2px solid #e0e0e0;
}
.ecol + .ecol {
    flex: 1;
    border-right: 0;
}
.ecol.num {
    padding-right: 4px;
}
.handle {
    position: absolute;
    width: 9px;
    height: 9px;
    background-color: #777;
}
.h-tl { left: -1px; top: -1px; }
.h-tc { left: 99px; top: -1px; }
.h-tr { right: -1px; top: -1px; }
.h-ml { left: -1px; top: 126px; }
.h-mr { right: -1px; top: 126px; }
.h-bl { left: -1px; bottom: -1px; }
.h-bc { left: 99px; bottom: -1px; }
.h-br { right: -1px; bottom: -1px; }
```
